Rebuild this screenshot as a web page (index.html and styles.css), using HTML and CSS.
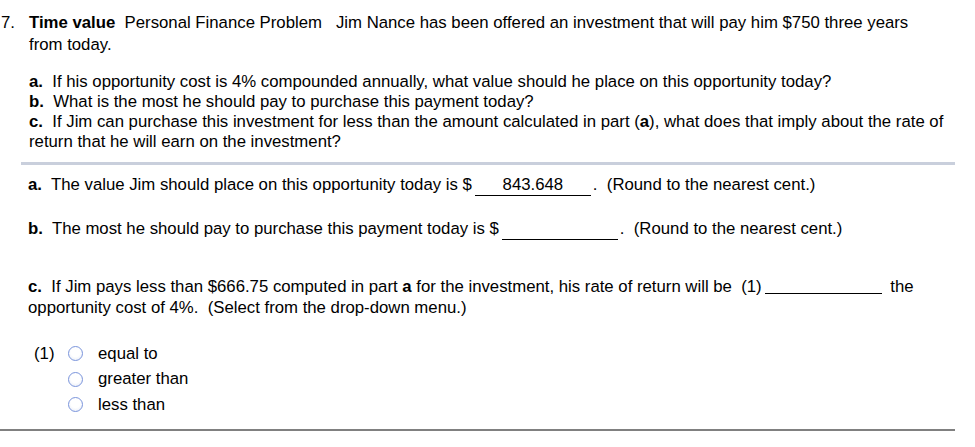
FILE: index.html
```html
<!DOCTYPE html>
<html lang="en">
<head>
    <meta charset="UTF-8">
    <title>Time value - Personal Finance Problem</title>
    <link rel="stylesheet" href="styles.css">
</head>
<body>
    <div class="page">
        <div class="question">
            <div class="num">7.</div>
            <div class="body">
                <p class="intro"><b>Time value</b>&nbsp; Personal Finance Problem&nbsp;&nbsp; Jim Nance has been offered an investment that will pay him $750 three years from today.</p>
                <div class="parts">
                    <div><b>a.</b>&nbsp; If his opportunity cost is 4% compounded annually, what value should he place on this opportunity today?</div>
                    <div><b>b.</b>&nbsp; What is the most he should pay to purchase this payment today?</div>
                    <div><b>c.</b>&nbsp; If Jim can purchase this investment for less than the amount calculated in part (<b>a</b>), what does that imply about the rate of return that he will earn on the investment?</div>
                </div>
            </div>
        </div>

        <hr class="divider">

        <div class="answers">
            <div class="answer answer-a"><b>a.</b>&nbsp; The value Jim should place on this opportunity today is $<span class="blank filled">843.648</span><span class="after">.&nbsp; (Round to the nearest cent.)</span></div>
            <div class="answer answer-b"><b>b.</b>&nbsp; The most he should pay to purchase this payment today is $<span class="blank"></span><span class="after">.&nbsp; (Round to the nearest cent.)</span></div>
            <div class="answer answer-c"><b>c.</b>&nbsp; If Jim pays less than $666.75 computed in part <b>a</b> for the investment, his rate of return will be &nbsp;(1)<span class="drop"></span> the opportunity cost of 4%.&nbsp; (Select from the drop-down menu.)</div>

            <div class="choices">
                <div class="choice-label">(1)</div>
                <div class="options">
                    <label class="option"><span class="radio"></span>equal to</label>
                    <label class="option"><span class="radio"></span>greater than</label>
                    <label class="option"><span class="radio"></span>less than</label>
                </div>
            </div>
        </div>

        <hr class="bottom-rule">
    </div>
</body>
</html>
```

FILE: styles.css
```css
body {
    margin: 0;
    font-family: "Liberation Sans", Arial, sans-serif;
    font-size: 16.75px;
    color: #000;
    background: #fff;
}
.page {
    width: 955px;
}
.question {
    display: flex;
    padding-top: 12px;
}
.num {
    width: 29px;
    padding-left: 1px;
    box-sizing: border-box;
    line-height: 22px;
}
.body {
    flex: 1;
    padding-right: 10px;
}
.intro {
    margin: 0;
    line-height: 22px;
}
.parts {
    margin-top: 16px;
    line-height: 20px;
}
.divider {
    margin: 10px 0 0 21px;
    border: none;
    height: 3px;
    background: #c9cfdc;
}
.answers {
    padding-left: 28px;
}
.answer {
    line-height: 20px;
}
.answer-a {
    margin-top: 10px;
}
.answer-b {
    margin-top: 23px;
}
.answer-c {
    margin-top: 36px;
    line-height: 21px;
    padding-right: 20px;
}
.blank {
    display: inline-block;
    width: 116px;
    height: 20px;
    border-bottom: 1px solid #000;
    text-align: center;
    vertical-align: top;
    margin-left: 3px;
}
.after {
    margin-left: 2px;
}
.drop {
    display: inline-block;
    width: 117px;
    height: 17px;
    border-bottom: 1px solid #000;
    vertical-align: top;
    margin: 0 4px 0 3px;
}
.choices {
    display: flex;
    margin-top: 23px;
    padding-left: 6px;
}
.choice-label {
    width: 34px;
    line-height: 26px;
}
.options {
    display: flex;
    flex-direction: column;
}
.option {
    display: flex;
    align-items: center;
    height: 25.5px;
}
.radio {
    width: 13px;
    height: 13px;
    border: 1.8px solid #7b95dc;
    border-radius: 50%;
    background: radial-gradient(circle at 50% 40%, #fff 45%, #e2e8f5 100%);
    margin-right: 15px;
}
.bottom-rule {
    margin: 11px 0 0 0;
    border: none;
    height: 2px;
    background: #808080;
}
```
